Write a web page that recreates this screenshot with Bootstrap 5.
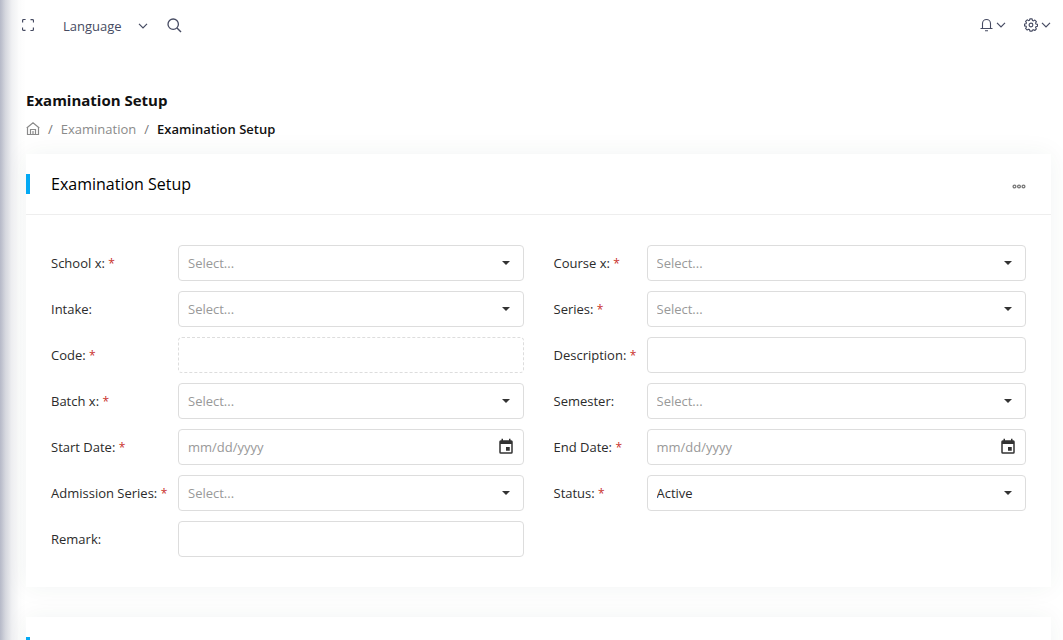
<!DOCTYPE html>
<html lang="en">
<head>
<meta charset="utf-8">
<meta name="viewport" content="width=device-width, initial-scale=1">
<title>Examination Setup</title>
<link rel="stylesheet" href="https://cdn.jsdelivr.net/npm/bootstrap@5.3.0/dist/css/bootstrap.min.css">
<style>
  :root { --ink: #2b2b2b; --muted: #8a8a8a; --icon: #464b62; --line: #dddddd; --accent: #03a9f4; }
  body { font-family: "Open Sans", "Noto Sans", sans-serif; font-size: 13px; line-height: 20px; color: var(--ink); background: #fff; scrollbar-width: none; }
  /* soft edge cast by the collapsed side menu */
  .side-shade { position: fixed; inset: 0 auto 0 0; width: 26px; z-index: 5; pointer-events: none;
    background: linear-gradient(90deg, rgba(50,60,100,.36) 0, rgba(50,60,95,.21) 20%, rgba(50,60,90,.08) 45%, rgba(50,60,80,.02) 72%, rgba(50,60,80,0) 100%); }
  .topbar { height: 50px; padding: 0 12px 0 22px; color: var(--icon); }
  .icon-btn { display: inline-flex; align-items: center; border: 0; padding: 0; background: none; color: var(--icon); line-height: 20px; }
  .icon-btn svg, .crumbs svg { display: block; fill: none; stroke: currentColor; }
  .lang { font-size: 13px; gap: 16px; margin: 2px 19px 0 29px; }
  .tools { gap: 18px; }
  .tools .icon-btn { gap: 3px; }
  .page { padding: 40px 12px 0 26px; }
  .page-title { font-size: 15px; font-weight: 700; line-height: 20px; color: #111; margin: 0 0 8px; }
  .crumbs { --bs-breadcrumb-item-padding-x: 8px; --bs-breadcrumb-divider-color: #777; font-size: 13px; line-height: 22px; margin-bottom: 14px; }
  .crumbs a { color: var(--muted); text-decoration: none; }
  .crumbs .active { color: #111; font-weight: 600; }
  .crumbs .active::before { font-weight: 400; }
  .panel { border: 0; border-radius: 0; margin-bottom: 30px; box-shadow: 0 0 24px rgba(30,60,50,.06); }
  .panel-head { height: 61px; padding: 0 25px 0 0; border-bottom: 1px solid #eee; }
  .panel-title { font-size: 16px; font-weight: 400; line-height: 20px; margin: 0; padding-left: 21px; border-left: 4px solid var(--accent); color: #000; }
  .more { color: #777; padding-top: 4px; }
  .panel-body { padding: 30px 25px; column-gap: 30px; }
  .fields { row-gap: 10px; }
  .field { display: grid; align-items: center; grid-template-columns: 127px 1fr; min-height: 36px; }
  .right .field { grid-template-columns: 93px 1fr; }
  .field label { white-space: nowrap; }
  .field label span { color: #c9302c; font-size: 12px; }
  .box { height: 36px; border: 1px solid var(--line); border-radius: 4px; padding: 0 36px 0 9px; font-size: 13px; line-height: 20px; color: var(--ink); background-color: #fff; }
  .box::placeholder { color: #999; }
  .form-select.box { background-image: url("data:image/svg+xml,%3Csvg xmlns='http://www.w3.org/2000/svg' viewBox='0 0 8 4'%3E%3Cpath fill='%23333' d='M0 0h8L4 4z'/%3E%3C/svg%3E"); background-size: 8px 4px; background-position: right 13px center; }
  .form-select.box.unset { color: #999; }
  .box.fixed-value { border-style: dashed; }
  .pick { position: absolute; right: 9px; top: 9px; }
  .pick svg { fill: #333; stroke: none; }
</style>
</head>
<body>
<div class="side-shade"></div>
<header class="topbar d-flex align-items-center">
  <button class="icon-btn" aria-label="Full screen"><svg width="12" height="12" viewBox="0 0 12 12"><path stroke-width="1.200" d="M.6 3.500v-2a1 1 0 0 1 1-1h2M8.500 .6h2a1 1 0 0 1 1 1v2M11.400 8.500v2a1 1 0 0 1-1 1h-2M3.500 11.400h-2a1 1 0 0 1-1-1v-2"/></svg></button>
  <button class="icon-btn lang">Language <svg width="10" height="6" viewBox="0 0 10 6"><path stroke-width="1.200" d="M1 .8l4 4 4-4"/></svg></button>
  <button class="icon-btn" aria-label="Search"><svg width="15" height="15" viewBox="0 0 15 15"><circle cx="6.200" cy="6.200" r="5.200" stroke-width="1.300"/><path stroke-width="1.400" d="M10 10l4 4"/></svg></button>
  <div class="tools ms-auto d-flex">
    <button class="icon-btn" aria-label="Notifications"><svg width="13" height="14" viewBox="0 0 13 14"><path stroke-width="1.100" d="M.5 10.500h12M2.500 10.500V5.500a4 4 0 0 1 8 0v5M5 12.700h3"/></svg><svg width="10" height="6" viewBox="0 0 10 6"><path stroke-width="1.200" d="M1 .8l4 4 4-4"/></svg></button>
    <button class="icon-btn" aria-label="Settings"><svg width="14" height="14" viewBox="0 0 15 15"><path stroke-width="1.200" stroke-linejoin="round" d="M6.300 1h2.400l.4 1.700 1 .4 1.500-.9 1.700 1.700-.9 1.500.4 1 1.700.4v2l-1.700.4-.4 1 .9 1.500-1.700 1.700-1.500-.9-1 .4L8.700 14H6.300l-.4-1.600-1-.4-1.500.9-1.700-1.700.9-1.500-.4-1L.5 8.500v-2l1.700-.4.4-1-.9-1.500 1.700-1.700 1.500.9 1-.4z"/><circle cx="7.500" cy="7.500" r="2" stroke-width="1.200"/></svg><svg width="10" height="6" viewBox="0 0 10 6"><path stroke-width="1.200" d="M1 .8l4 4 4-4"/></svg></button>
  </div>
</header>

<main class="page">
  <h1 class="page-title">Examination Setup</h1>
  <nav aria-label="breadcrumb">
    <ol class="breadcrumb crumbs">
      <li class="breadcrumb-item d-flex align-items-center"><a href="#" aria-label="Home"><svg width="14" height="14" viewBox="0 0 14 14"><path stroke-width="1.200" d="M.7 6L7 .8 13.300 6M1.500 5.500v7h11v-7M4.500 12.500V7.500h5v5M7 9v3.500"/></svg></a></li>
      <li class="breadcrumb-item"><a href="#">Examination</a></li>
      <li class="breadcrumb-item active" aria-current="page">Examination Setup</li>
    </ol>
  </nav>

  <section class="card panel">
    <div class="panel-head d-flex align-items-center justify-content-between">
      <h2 class="panel-title">Examination Setup</h2>
      <button class="icon-btn more" aria-label="More"><svg width="14" height="5" viewBox="0 0 14 5"><g stroke-width="1.300"><circle cx="2.500" cy="2.500" r="1.400"/><circle cx="7" cy="2.500" r="1.400"/><circle cx="11.500" cy="2.500" r="1.400"/></g></svg></button>
    </div>
    <form class="panel-body d-flex">
      <div class="fields d-grid flex-fill w-50">
        <div class="field"><label for="school">School x: <span>*</span></label><select id="school" class="form-select box unset"><option>Select...</option></select></div>
        <div class="field"><label for="intake">Intake:</label><select id="intake" class="form-select box unset"><option>Select...</option></select></div>
        <div class="field"><label for="code">Code: <span>*</span></label><input id="code" class="form-control box fixed-value" readonly></div>
        <div class="field"><label for="batch">Batch x: <span>*</span></label><select id="batch" class="form-select box unset"><option>Select...</option></select></div>
        <div class="field"><label for="start">Start Date: <span>*</span></label><div class="position-relative"><input id="start" class="form-control box" placeholder="mm/dd/yyyy"><button type="button" class="icon-btn pick" aria-label="Pick start date"><svg width="18" height="18" viewBox="0 0 24 24"><path d="M17 12h-5v5h5zM16 1v2H8V1H6v2H5a2 2 0 0 0-2 2v14a2 2 0 0 0 2 2h14a2 2 0 0 0 2-2V5a2 2 0 0 0-2-2h-1V1zm3 18H5V8h14z"/></svg></button></div></div>
        <div class="field"><label for="adm">Admission Series: <span>*</span></label><select id="adm" class="form-select box unset"><option>Select...</option></select></div>
        <div class="field"><label for="remark">Remark:</label><input id="remark" class="form-control box"></div>
      </div>
      <div class="fields right d-grid flex-fill w-50 align-content-start">
        <div class="field"><label for="course">Course x: <span>*</span></label><select id="course" class="form-select box unset"><option>Select...</option></select></div>
        <div class="field"><label for="series">Series: <span>*</span></label><select id="series" class="form-select box unset"><option>Select...</option></select></div>
        <div class="field"><label for="desc">Description: <span>*</span></label><input id="desc" class="form-control box"></div>
        <div class="field"><label for="sem">Semester:</label><select id="sem" class="form-select box unset"><option>Select...</option></select></div>
        <div class="field"><label for="end">End Date: <span>*</span></label><div class="position-relative"><input id="end" class="form-control box" placeholder="mm/dd/yyyy"><button type="button" class="icon-btn pick" aria-label="Pick end date"><svg width="18" height="18" viewBox="0 0 24 24"><path d="M17 12h-5v5h5zM16 1v2H8V1H6v2H5a2 2 0 0 0-2 2v14a2 2 0 0 0 2 2h14a2 2 0 0 0 2-2V5a2 2 0 0 0-2-2h-1V1zm3 18H5V8h14z"/></svg></button></div></div>
        <div class="field"><label for="status">Status: <span>*</span></label><select id="status" class="form-select box"><option>Active</option></select></div>
      </div>
    </form>
  </section>

  <section class="card panel">
    <div class="panel-head d-flex align-items-center">
      <h2 class="panel-title">&nbsp;</h2>
    </div>
  </section>
</main>
<script src="https://cdn.jsdelivr.net/npm/bootstrap@5.3.0/dist/js/bootstrap.bundle.min.js"></script>
</body>
</html>
